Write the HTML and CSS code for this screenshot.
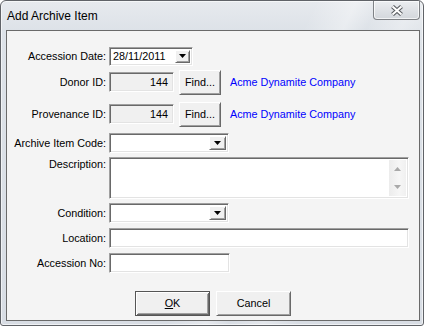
FILE: index.html
```html
<!DOCTYPE html>
<html lang="en">
<head>
<meta charset="utf-8">
<title>Add Archive Item</title>
<link rel="stylesheet" href="styles.css">
</head>
<body>
<div class="window">
  <div class="titlebar">
    <span class="title">Add Archive Item</span>
    <div class="close" aria-label="Close">
      <svg width="14" height="11" viewBox="0 0 14 11">
        <path d="M2.5 1.5 L11.5 9.5 M11.5 1.5 L2.5 9.5" stroke="#5c5f63" stroke-width="4.2" fill="none"/>
        <path d="M2.5 1.5 L11.5 9.5 M11.5 1.5 L2.5 9.5" stroke="#ffffff" stroke-width="2" fill="none"/>
      </svg>
    </div>
  </div>
  <div class="client">
    <div class="row">
      <span class="lbl">Accession Date:</span>
      <div class="box sunken date">
        <span class="val">28/11/2011</span>
        <span class="drop raised"><svg width="7" height="4" viewBox="0 0 7 4"><polygon points="0,0 7,0 3.5,4" fill="#000"/></svg></span>
      </div>
    </div>
    <div class="row mt-6">
      <span class="lbl">Donor ID:</span>
      <div class="box sunken idbox"><span class="num">144</span></div>
      <div class="btn raised find">Find...</div>
      <span class="link">Acme Dynamite Company</span>
    </div>
    <div class="row mt-12">
      <span class="lbl">Provenance ID:</span>
      <div class="box sunken idbox"><span class="num">144</span></div>
      <div class="btn raised find">Find...</div>
      <span class="link">Acme Dynamite Company</span>
    </div>
    <div class="row mt-9">
      <span class="lbl">Archive Item Code:</span>
      <div class="box sunken combo white">
        <span class="drop raised"><svg width="7" height="4" viewBox="0 0 7 4"><polygon points="0,0 7,0 3.5,4" fill="#000"/></svg></span>
      </div>
    </div>
    <div class="row row-desc mt-4">
      <span class="lbl lbl-top">Description:</span>
      <div class="box sunken desc white">
        <div class="desc-text"></div>
        <div class="vscroll">
          <svg width="7" height="4" viewBox="0 0 7 4"><polygon points="3.5,0 7,4 0,4" fill="#a9a9a9"/></svg>
          <svg width="7" height="4" viewBox="0 0 7 4"><polygon points="0,0 7,0 3.5,4" fill="#a9a9a9"/></svg>
        </div>
      </div>
    </div>
    <div class="row mt-4">
      <span class="lbl">Condition:</span>
      <div class="box sunken combo white">
        <span class="drop raised"><svg width="7" height="4" viewBox="0 0 7 4"><polygon points="0,0 7,0 3.5,4" fill="#000"/></svg></span>
      </div>
    </div>
    <div class="row mt-5">
      <span class="lbl">Location:</span>
      <div class="box sunken wide white"></div>
    </div>
    <div class="row mt-5">
      <span class="lbl">Accession No:</span>
      <div class="box sunken accno white"></div>
    </div>
    <div class="actions">
      <div class="btn raised default"><span><u>O</u>K</span></div>
      <div class="btn raised">Cancel</div>
    </div>
  </div>
</div>
</body>
</html>
```

FILE: styles.css
```css
* { box-sizing: border-box; }
html, body { margin: 0; padding: 0; background: #ffffff; }
body {
  font-family: "Liberation Sans", Arial, sans-serif;
  font-size: 10.8px;
  color: #000;
}

.window {
  width: 424px;
  height: 326px;
  border: 1px solid #606368;
  border-radius: 6px 6px 3px 3px;
  background: linear-gradient(115deg, rgba(255,255,255,0) 55%, rgba(255,255,255,.35) 62%, rgba(255,255,255,0) 66%, rgba(255,255,255,.3) 72%, rgba(255,255,255,0) 78%),
              linear-gradient(180deg, #e7eaee 0, #dde2e8 29px, #d8dde4 100%);
  box-shadow: inset 0 0 0 1px rgba(255,255,255,.6);
  display: flex;
  flex-direction: column;
}

.titlebar {
  flex: none;
  height: 29px;
  display: flex;
  align-items: flex-start;
  justify-content: space-between;
  padding: 0 3px 0 6px;
}
.title {
  font-size: 12px;
  line-height: 14px;
  margin-top: 8px;
}
.close {
  width: 47px;
  height: 19px;
  border: 1px solid #7f8286;
  border-top: none;
  border-radius: 0 0 4px 4px;
  background: linear-gradient(180deg, #eceef1 0, #dfe2e6 50%, #d3d7dc 100%);
  box-shadow: inset 0 0 0 1px rgba(255,255,255,.7);
  display: flex;
  align-items: center;
  justify-content: center;
}

.client {
  flex: 1;
  margin: 0 3px 4px 5px;
  border: 1px solid #6a6a6a;
  background: #f4f4f4;
  padding-top: 15px;
  display: flex;
  flex-direction: column;
}

.row {
  display: flex;
  align-items: center;
  height: 20px;
}
.row-desc { height: 42px; align-items: flex-start; }
.mt-4 { margin-top: 4px; }
.mt-5 { margin-top: 5px; }
.mt-6 { margin-top: 6px; }
.mt-9 { margin-top: 9px; }
.mt-12 { margin-top: 12px; }

.lbl {
  flex: none;
  width: 99px;
  margin-right: 3px;
  text-align: right;
  white-space: nowrap;
  line-height: 13px;
}
.lbl-top { padding-top: 1px; }

.sunken {
  border: 1px solid;
  border-color: #a0a0a0 #ffffff #ffffff #a0a0a0;
  box-shadow: inset 1px 1px 0 #696969, inset -1px -1px 0 #e3e3e3;
}
.raised {
  border: 1px solid;
  border-color: #ffffff #696969 #696969 #ffffff;
  box-shadow: inset 1px 1px 0 #f0f0f0, inset -1px -1px 0 #a0a0a0;
  background: #f0f0f0;
}

.box {
  flex: none;
  height: 20px;
  display: flex;
  align-items: center;
  padding: 2px;
  background: #f0f0f0;
}
.white { background: #ffffff; }

.date { width: 84px; height: 19px; background: #fff; justify-content: space-between; }
.date .val { padding-left: 1px; line-height: 13px; }
.drop {
  width: 15px;
  height: 100%;
  display: flex;
  align-items: center;
  justify-content: center;
}
.combo { width: 120px; justify-content: flex-end; }
.combo .drop { width: 17px; }

.idbox { width: 65px; justify-content: flex-end; padding-right: 5px; }
.num { line-height: 13px; }

.btn {
  flex: none;
  display: flex;
  align-items: center;
  justify-content: center;
  height: 25px;
  line-height: 13px;
}
.find { width: 42px; margin-left: 5px; }
.link { margin-left: 9px; color: #0000ff; white-space: nowrap; }

.desc { width: 300px; height: 42px; align-items: stretch; padding: 2px; }
.desc-text { flex: 1; }
.vscroll {
  width: 17px;
  flex: none;
  background: linear-gradient(90deg, #ececec, #f6f6f6 60%, #f0f0f0);
  display: flex;
  flex-direction: column;
  justify-content: space-between;
  align-items: center;
  padding: 7px 0 7px;
}

.wide { width: 300px; }
.accno { width: 121px; }

.actions {
  margin-top: 18px;
  display: flex;
  justify-content: center;
  gap: 6px;
}
.actions .btn { width: 75px; }
.default {
  border-color: #555555;
  box-shadow: inset 1px 1px 0 #ffffff, inset -1px -1px 0 #696969, inset 2px 2px 0 #f0f0f0, inset -2px -2px 0 #a0a0a0;
}
```
